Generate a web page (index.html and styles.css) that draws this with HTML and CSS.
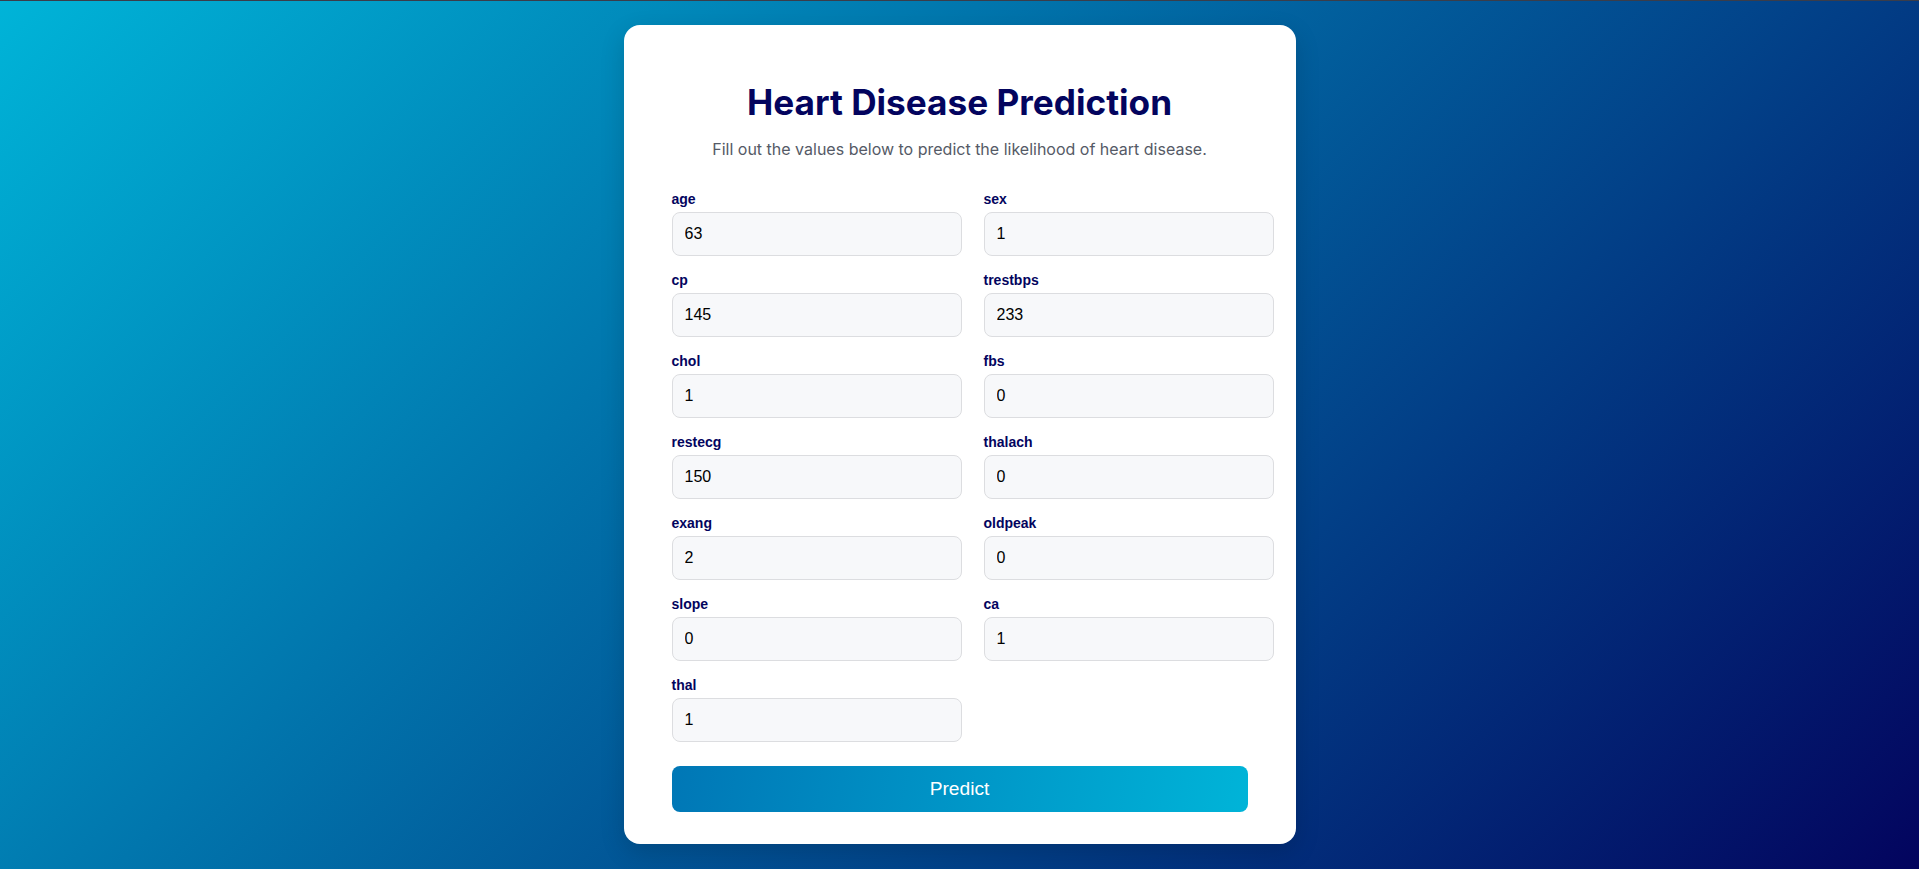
FILE: index.html
```html
<!DOCTYPE html>
<html lang="en">
<head>
<meta charset="utf-8">
<title>Heart Disease Prediction</title>
<link rel="stylesheet" href="styles.css">
</head>
<body>
<main class="card">
  <h1 class="title">Heart Disease Prediction</h1>
  <p class="subtitle">Fill out the values below to predict the likelihood of heart disease.</p>
  <form class="form">
    <div class="grid">
      <div class="field"><label>age</label><input type="text" value="63"></div>
      <div class="field"><label>sex</label><input type="text" value="1"></div>
      <div class="field"><label>cp</label><input type="text" value="145"></div>
      <div class="field"><label>trestbps</label><input type="text" value="233"></div>
      <div class="field"><label>chol</label><input type="text" value="1"></div>
      <div class="field"><label>fbs</label><input type="text" value="0"></div>
      <div class="field"><label>restecg</label><input type="text" value="150"></div>
      <div class="field"><label>thalach</label><input type="text" value="0"></div>
      <div class="field"><label>exang</label><input type="text" value="2"></div>
      <div class="field"><label>oldpeak</label><input type="text" value="0"></div>
      <div class="field"><label>slope</label><input type="text" value="0"></div>
      <div class="field"><label>ca</label><input type="text" value="1"></div>
      <div class="field"><label>thal</label><input type="text" value="1"></div>
    </div>
    <button type="button" class="predict">Predict</button>
  </form>
</main>
</body>
</html>
```

FILE: styles.css
```css
html, body {
  margin: 0;
  padding: 0;
}

body {
  min-height: 100vh;
  display: flex;
  align-items: center;
  justify-content: center;
  background: linear-gradient(135deg, #00b4d8 0%, #03045e 100%);
  box-shadow: inset 0 1px 0 #3a3d4a;
  font-family: "Liberation Sans", Arial, sans-serif;
}

.card {
  width: 576px;
  padding: 32px 48px;
  background: #ffffff;
  border-radius: 16px;
  box-shadow: 0 8px 24px rgba(0, 0, 0, 0.15);
}

.title {
  margin: 24px 0 16px;
  font-family: Inter, "Noto Sans", sans-serif;
  font-size: 35.2px;
  font-weight: 700;
  color: #03045e;
  text-align: center;
}

.subtitle {
  margin: 0 0 32px;
  font-family: Inter, "Noto Sans", sans-serif;
  font-size: 16px;
  color: #555a66;
  text-align: center;
}

.form {
  display: flex;
  flex-direction: column;
}

.grid {
  display: grid;
  grid-template-columns: 1fr 1fr;
  column-gap: 48px;
  row-gap: 16px;
}

.field {
  display: flex;
  flex-direction: column;
  min-width: 0;
}

.field label {
  display: block;
  margin-bottom: 5px;
  font-size: 14px;
  line-height: 16px;
  font-weight: 700;
  color: #03045e;
}

.field input {
  box-sizing: content-box;
  width: 100%;
  padding: 12px;
  border: 1px solid #dcdde0;
  border-radius: 8px;
  background: #f7f8fa;
  font-family: "Liberation Sans", Arial, sans-serif;
  font-size: 16px;
  line-height: 18px;
  height: 18px;
  color: #000000;
  outline: none;
}

.predict {
  margin-top: 24px;
  width: 100%;
  padding: 12px;
  border: none;
  border-radius: 8px;
  background: linear-gradient(100deg, #0077b6 0%, #00b4d8 100%);
  color: #ffffff;
  font-family: "Liberation Sans", Arial, sans-serif;
  font-size: 19.2px;
  line-height: 22px;
  cursor: pointer;
}
```
